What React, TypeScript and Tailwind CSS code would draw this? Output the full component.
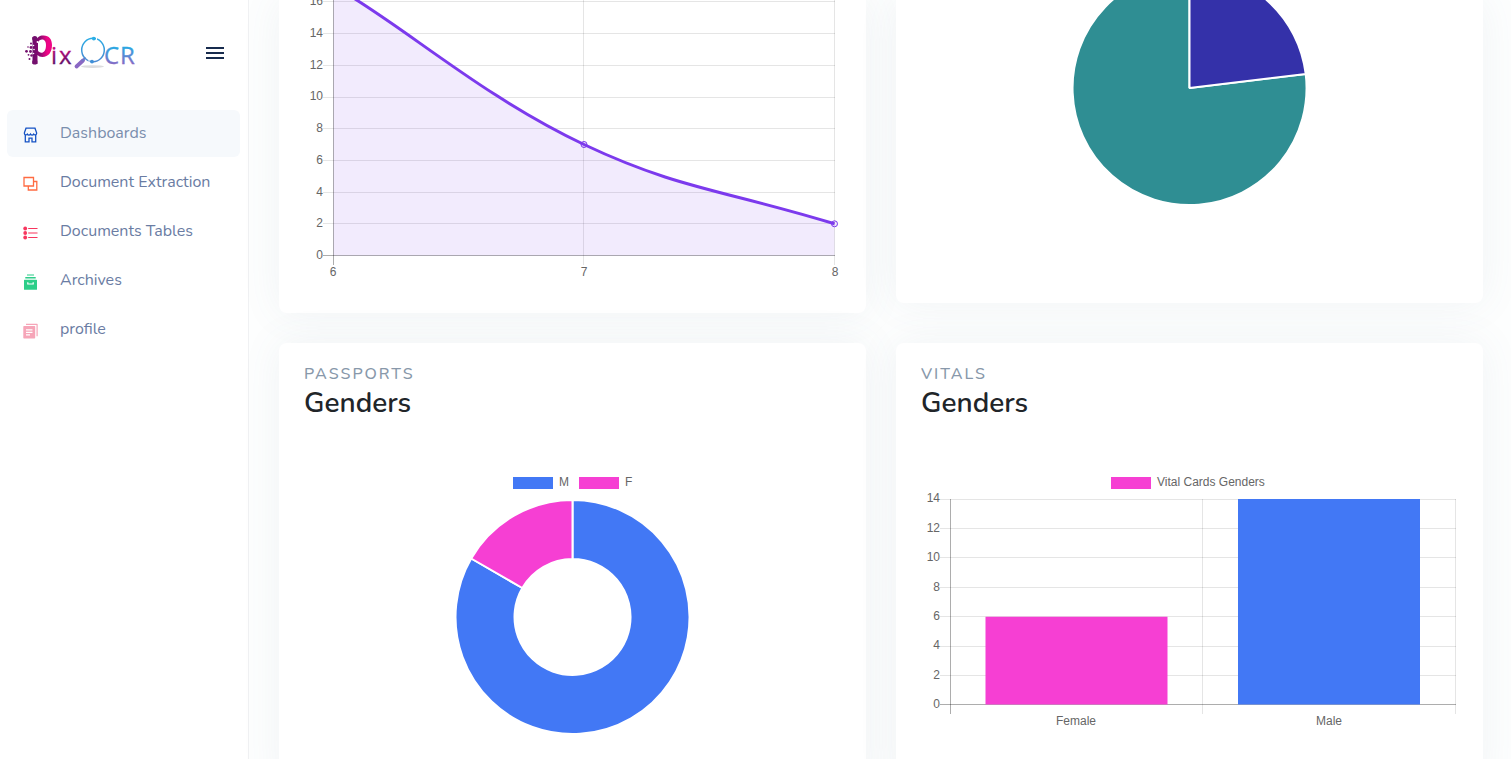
import React from "react";

const UI_FONT = "font-[Nunito,Lato,'Noto_Sans',sans-serif]";
const CARD = "bg-white shadow-[0_0_40px_rgba(90,115,135,0.08)] px-[25px]";
const CHART_TEXT = "fill-[#666] text-[12px] font-['Liberation_Sans',Arial,sans-serif]";

function Logo() {
  return (
    <svg viewBox="0 0 112 36" className="h-9 w-28" role="img" aria-label="PixOCR">
      <defs>
        <linearGradient id="magenta" x1="0" y1="0" x2="1" y2="0">
          <stop offset="0" stopColor="#6b0a6b" />
          <stop offset="0.4" stopColor="#8d0a72" />
          <stop offset="0.75" stopColor="#ee0585" />
        </linearGradient>
        <linearGradient id="plum" x1="0" y1="8" x2="0" y2="30" gradientUnits="userSpaceOnUse">
          <stop offset="0" stopColor="#e0067f" />
          <stop offset="1" stopColor="#5c1168" />
        </linearGradient>
        <linearGradient id="sky" x1="0" y1="10" x2="0" y2="30" gradientUnits="userSpaceOnUse">
          <stop offset="0" stopColor="#1eb0e6" />
          <stop offset="1" stopColor="#8a68c4" />
        </linearGradient>
        <linearGradient id="lens" x1="0" y1="2" x2="0" y2="28" gradientUnits="userSpaceOnUse">
          <stop offset="0" stopColor="#2aaee6" />
          <stop offset="1" stopColor="#4d87d0" />
        </linearGradient>
      </defs>
      <path
        d="M7.500 2h4.500v1.500C13.800 1 16 .5 18.500.5c5.800 0 8.500 4 8.500 9.500 0 7-3.500 12-9.500 12-2.200 0-4-.7-5-2v9H7.500z M13 7.500v8c1 3 8 4.500 8-5.500 0-7-6.500-6.500-8-2.500z"
        fill="url(#magenta)"
        fillRule="evenodd"
      />
      <g fill="#73106d">
        <circle cx="9.800" cy="3.500" r="2.600" />
        <circle cx="9.800" cy="27" r="2.600" />
        <circle cx="6" cy="8.500" r="1" />
        <circle cx="3" cy="12" r=".8" />
        <circle cx="6" cy="12.500" r="1.400" />
        <circle cx="1.500" cy="16.300" r="1.400" />
        <circle cx="5.500" cy="16.500" r="1.400" />
        <circle cx="3.500" cy="19.800" r=".9" />
        <circle cx="6.500" cy="20.500" r="1.200" />
        <circle cx="4.500" cy="24" r="1" />
      </g>
      <g fill="#fff">
        <circle cx="8.500" cy="10.500" r=".8" />
        <circle cx="9" cy="14.500" r=".8" />
        <circle cx="8.500" cy="18.500" r=".8" />
        <circle cx="12.500" cy="7" r=".9" />
      </g>
      <g
        className="font-['Open_Sans','Noto_Sans',sans-serif]"
        fill="url(#plum)"
        stroke="url(#plum)"
        strokeWidth=".3"
      >
        <text x="26" y="29" fontSize="24">i</text>
        <text x="34" y="29" fontSize="24">x</text>
      </g>
      <g
        className="font-['Open_Sans','Noto_Sans',sans-serif]"
        fill="url(#sky)"
        stroke="url(#sky)"
        strokeWidth=".3"
      >
        <text x="79" y="29" fontSize="24">C</text>
        <text x="95" y="29" fontSize="24">R</text>
      </g>
      <ellipse cx="67.500" cy="31.600" rx="11.500" ry="1.400" fill="#dcdcde" />
      <path d="M51.500 31.500l6.500-6" stroke="#8a68c4" strokeWidth="3.800" strokeLinecap="round" />
      <path d="M57 26l3.500-3.500" stroke="#6f78c8" strokeWidth="2" />
      <ellipse cx="68" cy="15" rx="11.300" ry="11.800" fill="none" stroke="url(#lens)" strokeWidth="1.500" />
      <path d="M71.500 1.500v4M64 24.500v4" stroke="#fff" strokeWidth="1" />
      <circle cx="68.800" cy="3.600" r="1.900" fill="#2aaee6" />
      <circle cx="67" cy="26.600" r="1.900" fill="#3f90d8" />
    </svg>
  );
}

function StoreIcon() {
  return (
    <svg viewBox="0 0 15 16" className="h-4 w-[15px]" fill="none" stroke="#1552c4" strokeWidth="1.300" aria-hidden="true">
      <path d="M3 1.200h9l1.600 4.600v.7c0 1.600-2 1.900-2.900.6-.8 1.300-2.400 1.300-3.200 0-.8 1.300-2.400 1.300-3.200 0C3.400 8.400 1.400 8.100 1.400 6.500v-.7z" />
      <path d="M2.300 8v6.800h3.700v-3.600h3v3.600h3.700V8" />
    </svg>
  );
}

function CopyIcon() {
  return (
    <svg viewBox="0 0 15 16" className="h-4 w-[15px]" fill="none" stroke="#ff6b42" strokeWidth="1.300" aria-hidden="true">
      <path d="M1 1.500h9.500v8.500H1zM10.500 5.500h3.300v8.500h-8.500V10" />
    </svg>
  );
}

function ListIcon() {
  return (
    <svg viewBox="0 0 15 16" className="h-4 w-[15px]" fill="#f7365e" aria-hidden="true">
      <circle cx="2.200" cy="3.500" r="1.900" />
      <circle cx="2.200" cy="8" r="1.900" />
      <circle cx="2.200" cy="12.500" r="1.900" />
      <path d="M5.200 2.900h9.300v1.200H5.200zM5.200 7.400h9.300v1.200H5.200zM5.200 11.900h9.300v1.200H5.200z" />
    </svg>
  );
}

function ArchiveIcon() {
  return (
    <svg viewBox="0 0 15 16" className="h-4 w-[15px]" fill="#2dce89" aria-hidden="true">
      <path d="M4 .4h7v1.200H4zM2.300 3h10.400v1.500H2.300z" />
      <path
        fillRule="evenodd"
        d="M1.500 5.700h12q.5 0 .5.500v9q0 .5-.5.500h-12q-.5 0-.5-.5v-9q0-.5.500-.5zM4.200 8.200v2.400h6.600V8.200H9.600v1.200H5.400V8.200z"
      />
    </svg>
  );
}

function PagesIcon() {
  return (
    <svg viewBox="0 0 15 16" className="h-4 w-[15px]" fill="#f6a5b8" aria-hidden="true">
      <path d="M3 .7h11q.7 0 .7.700v11.800h-1.200V1.900H3z" />
      <path
        fillRule="evenodd"
        d="M1 3h10.500q.7 0 .7.700v11q0 .7-.7.700H1q-.7 0-.7-.7v-11Q.3 3 1 3zM3 6.300v1.100h6.500V6.300zM3 8.800v1.100h6.500V8.800zM3 11.300v1.100h4v-1.100z"
      />
    </svg>
  );
}

const NAV = [
  { label: "Dashboards", icon: <StoreIcon /> },
  { label: "Document Extraction", icon: <CopyIcon /> },
  { label: "Documents Tables", icon: <ListIcon /> },
  { label: "Archives", icon: <ArchiveIcon /> },
  { label: "profile", icon: <PagesIcon /> },
];

function Sidebar() {
  return (
    <aside className="flex w-[249px] shrink-0 flex-col border-r border-[#f0f1f3] bg-white">
      <div className="flex items-center justify-between pt-[35px] pr-[21px] pl-[25px]">
        <a href="#">
          <Logo />
        </a>
        <button type="button" aria-label="Toggle menu" className="flex size-6 items-center justify-center">
          <svg viewBox="0 0 18 12" className="h-3 w-[18px]" fill="#172b4d">
            <path d="M0 0h18v2H0zM0 5h18v2H0zM0 10h18v2H0z" />
          </svg>
        </button>
      </div>
      <nav className="mt-[39px] flex flex-col gap-0.5 pr-2 pl-[7px]">
        {NAV.map((item, i) => (
          <a
            key={item.label}
            href="#"
            className={
              i === 0
                ? "flex h-[47px] items-center rounded-md bg-[#f6f9fc] pb-0.5 pl-4 text-[#7a8ead]"
                : "flex h-[47px] items-center rounded-md pb-0.5 pl-4 text-[#6a7ca3]"
            }
          >
            <span className="mt-1 flex w-[37px] shrink-0">{item.icon}</span>
            <span className="text-base leading-6">{item.label}</span>
          </a>
        ))}
      </nav>
    </aside>
  );
}

function CardTitle({ kicker, title }: { kicker: string; title: string }) {
  return (
    <header className="pt-[19px]">
      <h6 className="text-base leading-6 font-medium tracking-[2px] text-[#8898aa] uppercase">{kicker}</h6>
      <h2 className="text-[28px] leading-[34px] font-semibold text-[#212529]">{title}</h2>
    </header>
  );
}

function LineChart() {
  const rows = [1, 33, 65, 97, 128, 160, 192, 223];
  const ticks = [16, 14, 12, 10, 8, 6, 4, 2, 0];
  return (
    <svg viewBox="0 0 537 283" className="block w-full overflow-visible" role="img" aria-label="Documents per month">
      <g stroke="#000" strokeOpacity="0.1">
        {rows.map((y) => (
          <path key={y} d={`M19 ${y + 0.5}H531`} />
        ))}
        <path d="M279.500 0V265M530.500 0V265" />
        <path d="M29.500 0V265M19 255.500H531" strokeOpacity="0.32" />
      </g>
      <path d="M29.500-14.100C99 25 174 94 280 144.500C374 189 420 190 530.500 223.800V255.500H29.500Z" fill="#7c3aed" fillOpacity="0.1" />
      <path d="M29.500-14.100C99 25 174 94 280 144.500C374 189 420 190 530.500 223.800" fill="none" stroke="#7c3aed" strokeWidth="3" />
      <g fill="#7c3aed" fillOpacity="0.1" stroke="#7c3aed">
        <circle cx="280" cy="144.500" r="3" />
        <circle cx="530.500" cy="223.800" r="3" />
      </g>
      <g className={CHART_TEXT} textAnchor="end">
        {ticks.map((value) => (
          <text key={value} x="19" y={Math.round(259 - value * 15.875)}>{value}</text>
        ))}
      </g>
      <g className={CHART_TEXT} textAnchor="middle">
        <text x="29" y="276">6</text>
        <text x="280" y="276">7</text>
        <text x="531" y="276">8</text>
      </g>
    </svg>
  );
}

function PieChart() {
  return (
    <svg viewBox="0 0 537 273" className="block w-full" role="img" aria-label="Document share">
      <g stroke="#fff" strokeWidth="2" strokeLinejoin="bevel">
        <path d="M268.500 88L384.700 74A117 117 0 1 1 268.500-29Z" fill="#2f8e93" />
        <path d="M268.500 88V-29A117 117 0 0 1 384.700 74Z" fill="#3431a9" />
      </g>
    </svg>
  );
}

function DonutChart() {
  return (
    <svg viewBox="0 0 537 270" className="block w-full" role="img" aria-label="Passport genders">
      <path d="M209 7h40v12h-40z" fill="#4278f5" />
      <path d="M275 7h40v12h-40z" fill="#f63fd3" />
      <g className={CHART_TEXT}>
        <text x="255" y="16">M</text>
        <text x="321" y="16">F</text>
      </g>
      <g stroke="#fff" strokeWidth="2" strokeLinejoin="bevel">
        <path d="M268.500 30A117 117 0 1 1 167.200 88.500L218.300 118A58 58 0 1 0 268.500 89Z" fill="#4278f5" />
        <path d="M268.500 30A117 117 0 0 0 167.200 88.500L218.300 118A58 58 0 0 1 268.500 89Z" fill="#f63fd3" />
      </g>
    </svg>
  );
}

function BarChart() {
  const rows = [29, 58, 87, 117, 146, 176, 205];
  const ticks = [14, 12, 10, 8, 6, 4, 2, 0];
  return (
    <svg viewBox="0 0 537 270" className="block w-full" role="img" aria-label="Vital card genders">
      <path d="M190 7h40v12h-40z" fill="#f63fd3" />
      <text x="236" y="16" className={CHART_TEXT}>Vital Cards Genders</text>
      <g stroke="#000" strokeOpacity="0.1">
        {rows.map((y) => (
          <path key={y} d={`M19 ${y + 0.5}H535`} />
        ))}
        <path d="M281.500 29V244M534.500 29V244" />
        <path d="M29.500 29V244M19 234.500H535" strokeOpacity="0.32" />
      </g>
      <path d="M64.500 146.700h182V234.500h-182z" fill="#f63fd3" />
      <path d="M317 29h182V234.500h-182z" fill="#4278f5" />
      <g className={CHART_TEXT} textAnchor="end">
        {ticks.map((value) => (
          <text key={value} x="19" y={Math.round(238.2 - value * 14.7)}>{value}</text>
        ))}
      </g>
      <g className={CHART_TEXT} textAnchor="middle">
        <text x="155" y="255">Female</text>
        <text x="408" y="255">Male</text>
      </g>
    </svg>
  );
}

export default function App() {
  return (
    <div className={`flex h-screen overflow-hidden bg-[#fdfefe] ${UI_FONT}`}>
      <Sidebar />
      <main className="grid min-w-0 flex-1 grid-cols-2 content-start items-start gap-[30px] pr-7 pl-[30px]">
        <section className={`${CARD} rounded-b-lg pb-[30px]`}>
          <LineChart />
        </section>
        <section className={`${CARD} rounded-b-lg pb-[30px]`}>
          <PieChart />
        </section>
        <section className={`${CARD} rounded-lg pb-12`}>
          <CardTitle kicker="Passports" title="Genders" />
          <div className="mt-[50px]">
            <DonutChart />
          </div>
        </section>
        <section className={`${CARD} rounded-lg pb-12`}>
          <CardTitle kicker="Vitals" title="Genders" />
          <div className="mt-[50px]">
            <BarChart />
          </div>
        </section>
      </main>
    </div>
  );
}
